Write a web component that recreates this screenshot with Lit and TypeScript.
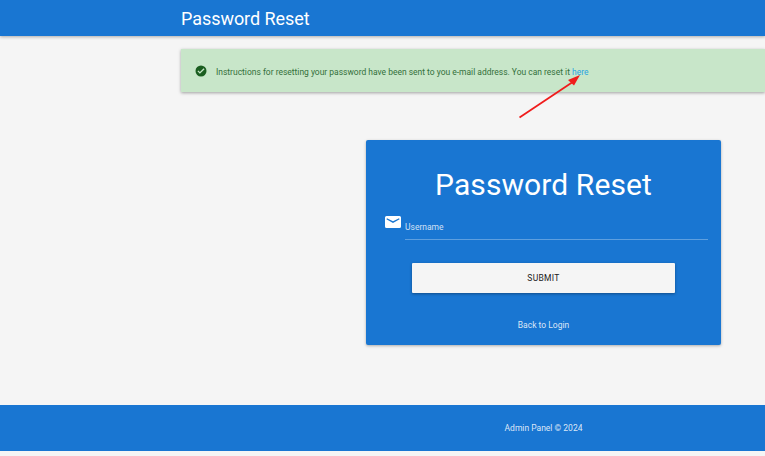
import { LitElement, html, css } from "lit";
import { customElement } from "lit/decorators.js";

@customElement("app-root")
export class AppRoot extends LitElement {
  static styles = css`
    :host {
      display: flex;
      flex-direction: column;
      position: relative;
      width: 765px;
      height: 456px;
      overflow: hidden;
      background: #f5f5f5;
      font-family: Roboto, "Liberation Sans", sans-serif;
      color: #fff;
    }
    .topbar {
      height: 36px;
      flex: none;
      background: #1976d2;
      box-shadow: 0 1px 3px rgba(0, 0, 0, 0.3);
      padding-left: 181px;
      display: flex;
      align-items: center;
      font-size: 18px;
      letter-spacing: -0.05px;
      box-sizing: border-box;
    }
    .alert {
      margin: 13px 0 0 181px;
      height: 43px;
      flex: none;
      background: #c8e6c9;
      color: #33703a;
      box-shadow: 0 1px 3px rgba(0, 0, 0, 0.35);
      display: flex;
      align-items: center;
      gap: 9px;
      padding-left: 14px;
      padding-top: 2px;
      box-sizing: border-box;
      font-size: 8.48px;
      line-height: 12px;
    }
    .alert svg {
      width: 12px;
      height: 12px;
      flex: none;
      margin-top: -2px;
    }
    .alert a {
      color: #29a4e0;
      text-decoration: none;
    }
    .stage {
      display: flex;
      justify-content: center;
      margin: 48px 44px 0 366px;
      flex: none;
    }
    .card {
      width: 355px;
      height: 205px;
      background: #1976d2;
      border-radius: 2px;
      box-shadow: 0 1px 3px rgba(0, 0, 0, 0.3);
      box-sizing: border-box;
      padding-top: 27px;
      display: flex;
      flex-direction: column;
      align-items: center;
    }
    h1 {
      margin: 0;
      font-weight: 400;
      font-size: 30px;
      line-height: 36px;
      letter-spacing: 0.1px;
    }
    .field {
      align-self: stretch;
      display: flex;
      margin: 12px 13px 0 18px;
      align-items: flex-start;
      gap: 5px;
    }
    .field svg {
      width: 16px;
      height: 14px;
      flex: none;
      margin-left: 1px;
      margin-right: -1px;
    }
    .input {
      flex: 1;
      height: 25px;
      border-bottom: 1px solid rgba(255, 255, 255, 0.3);
      font-size: 8.5px;
      color: rgba(255, 255, 255, 0.8);
      line-height: 18px;
      padding-top: 3px;
      box-sizing: border-box;
    }
    button {
      width: 263px;
      height: 30px;
      margin: 23px 0 0;
      background: #f5f5f5;
      color: #212121;
      border: none;
      border-radius: 1px;
      box-shadow: 0 1px 3px rgba(0, 0, 0, 0.35);
      font: inherit;
      font-size: 8.5px;
      font-weight: 400;
      letter-spacing: 0.3px;
    }
    .back {
      margin-top: 26px;
      font-size: 8.5px;
      line-height: 12px;
      color: rgba(255, 255, 255, 0.85);
    }
    .footer {
      flex: none;
      height: 46px;
      margin-top: 60px;
      background: #1976d2;
      display: flex;
      align-items: center;
      justify-content: center;
      padding-left: 322px;
      font-size: 8.5px;
      color: rgba(255, 255, 255, 0.85);
    }
    .arrow {
      position: absolute;
      left: 510px;
      top: 70px;
      width: 80px;
      height: 50px;
      pointer-events: none;
    }
  `;

  render() {
    return html`
      <header class="topbar">Password Reset</header>
      <div class="alert">
        <svg viewBox="0 0 24 24" aria-hidden="true">
          <path fill="#1b5e20" d="M12 1a11 11 0 1 0 0 22 11 11 0 0 0 0-22zm-2.2 16.6-4.9-4.9 1.8-1.8 3.1 3.1 7.5-7.5 1.8 1.8z" />
        </svg>
        <span>Instructions for resetting your password have been sent to you e-mail address. You can reset it <a href="#">here</a></span>
      </div>
      <div class="stage">
        <section class="card">
          <h1>Password Reset</h1>
          <div class="field">
            <svg viewBox="0 0 16 14" aria-hidden="true">
              <path fill="#fff" d="M1.500 1h13A1.500 1.500 0 0 1 16 2.500v9a1.500 1.500 0 0 1-1.500 1.500h-13A1.500 1.500 0 0 1 0 11.500v-9A1.500 1.500 0 0 1 1.500 1zM2 3.200l-.6 1L8 8l6.600-3.800-.6-1L8 6.300z" />
            </svg>
            <div class="input">Username</div>
          </div>
          <button>SUBMIT</button>
          <div class="back">Back to Login</div>
        </section>
      </div>
      <footer class="footer">Admin Panel © 2024</footer>
      <svg class="arrow" viewBox="0 0 80 50" aria-hidden="true">
        <path d="M9.500 47.500 62 12.500" stroke="#f01c1c" stroke-width="1.800" fill="none" />
        <path d="M70 5 58 10 64 15.500z" fill="#f01c1c" />
      </svg>
    `;
  }
}
